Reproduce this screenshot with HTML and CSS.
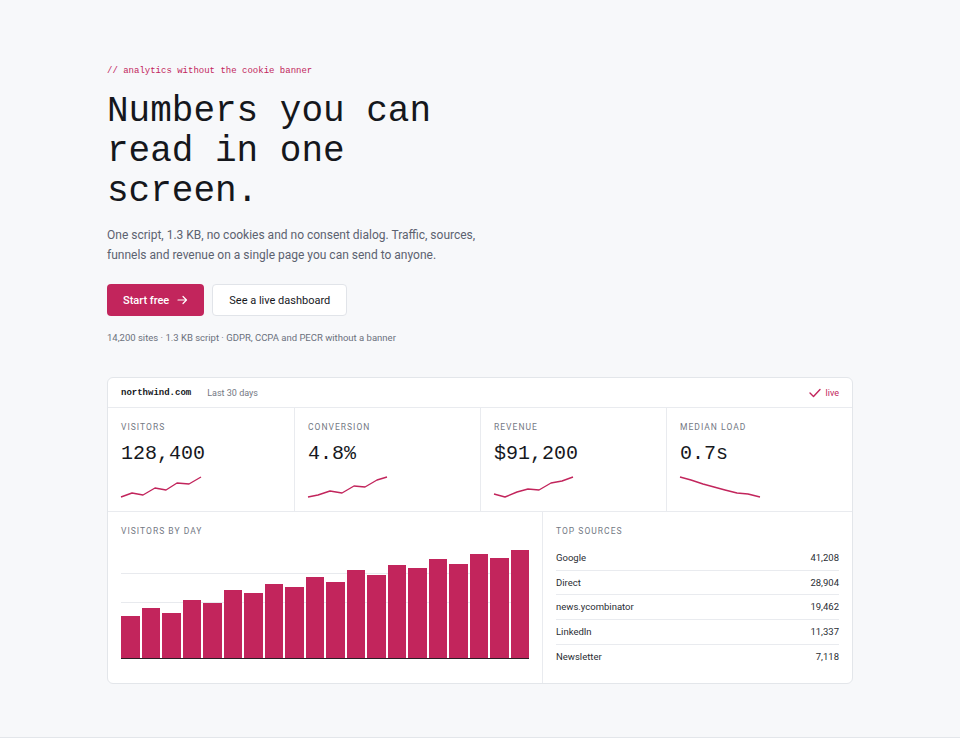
FILE: index.html
```html
<!DOCTYPE html>
<html lang="en">
<head>
    <title>northwind analytics</title>
    <link rel="stylesheet" href="styles.css">
</head>
<body>
    <section class="hero">
        <div class="wrap">
            <p class="eyebrow">// analytics without the cookie banner</p>
            <h1 class="title">Numbers you can read in one screen.</h1>
            <p class="lead">One script, 1.3 KB, no cookies and no consent dialog. Traffic, sources, funnels and revenue on a single page you can send to anyone.</p>

            <div class="actions">
                <a class="btn btn-primary" href="#">Start free
                    <svg class="arrow" width="11" height="10" viewBox="0 0 11 10"><path d="M1 5h8.5M6 1.5 9.5 5 6 8.5" fill="none" stroke="white" stroke-width="1.2" stroke-linecap="round" stroke-linejoin="round"/></svg>
                </a>
                <a class="btn btn-ghost" href="#">See a live dashboard</a>
            </div>

            <p class="proof">14,200 sites &middot; 1.3 KB script &middot; GDPR, CCPA and PECR without a banner</p>

            <div class="card">
                <div class="card-head">
                    <span class="site">northwind.com</span>
                    <span class="range">Last 30 days</span>
                    <span class="live">
                        <svg width="12" height="10" viewBox="0 0 12 10"><polyline points="1,5 4.5,8.5 11,1.5" fill="none" stroke="#c2255c" stroke-width="1.4" stroke-linecap="round" stroke-linejoin="round"/></svg>
                        live
                    </span>
                </div>

                <div class="stats">
                    <div class="stat">
                        <div class="label">Visitors</div>
                        <div class="value">128,400</div>
                        <svg class="spark" width="82" height="24" viewBox="0 0 82 24"><polyline points="1,22 12,18 23,20 35,13 46,15 57,8 69,9 81,2"/></svg>
                    </div>
                    <div class="stat">
                        <div class="label">Conversion</div>
                        <div class="value">4.8%</div>
                        <svg class="spark" width="82" height="24" viewBox="0 0 82 24"><polyline points="1,22 11,20 23,16 35,18 47,11 58,12 70,5 80,2"/></svg>
                    </div>
                    <div class="stat">
                        <div class="label">Revenue</div>
                        <div class="value">$91,200</div>
                        <svg class="spark" width="82" height="24" viewBox="0 0 82 24"><polyline points="1,19 12,22 24,17 35,14 46,15 58,8 69,6 80,2"/></svg>
                    </div>
                    <div class="stat">
                        <div class="label">Median load</div>
                        <div class="value">0.7s</div>
                        <svg class="spark" width="82" height="24" viewBox="0 0 82 24"><polyline points="1,2 12,5 24,9 35,12 46,15 58,18 69,19 81,22"/></svg>
                    </div>
                </div>

                <div class="lower">
                    <div class="panel">
                        <div class="label">Visitors by day</div>
                        <div class="chart">
                            <div class="bar" style="height:42px"></div>
                            <div class="bar" style="height:50px"></div>
                            <div class="bar" style="height:45px"></div>
                            <div class="bar" style="height:58px"></div>
                            <div class="bar" style="height:55px"></div>
                            <div class="bar" style="height:68px"></div>
                            <div class="bar" style="height:65px"></div>
                            <div class="bar" style="height:74px"></div>
                            <div class="bar" style="height:71px"></div>
                            <div class="bar" style="height:81px"></div>
                            <div class="bar" style="height:76px"></div>
                            <div class="bar" style="height:88px"></div>
                            <div class="bar" style="height:83px"></div>
                            <div class="bar" style="height:93px"></div>
                            <div class="bar" style="height:90px"></div>
                            <div class="bar" style="height:99px"></div>
                            <div class="bar" style="height:94px"></div>
                            <div class="bar" style="height:104px"></div>
                            <div class="bar" style="height:100px"></div>
                            <div class="bar" style="height:108px"></div>
                        </div>
                    </div>
                    <div class="panel sources">
                        <div class="label">Top sources</div>
                        <ul class="rows">
                            <li><span>Google</span><span>41,208</span></li>
                            <li><span>Direct</span><span>28,904</span></li>
                            <li><span>news.ycombinator</span><span>19,462</span></li>
                            <li><span>LinkedIn</span><span>11,337</span></li>
                            <li><span>Newsletter</span><span>7,118</span></li>
                        </ul>
                    </div>
                </div>
            </div>
        </div>
    </section>
</body>
</html>
```

FILE: styles.css
```css
body {
    margin: 0;
    background-color: #f7f8fa;
    color: #16181d;
    font-family: Roboto, "Noto Sans", sans-serif;
}

.hero {
    padding: 64px 0 53px;
    border-bottom: 1px solid #e3e6ea;
}

.wrap {
    width: 746px;
    margin: 0 auto;
}

.eyebrow {
    margin: 0;
    font-family: "Liberation Mono", monospace;
    font-size: 9px;
    line-height: 14px;
    color: #c2255c;
}

.title {
    max-width: 16ch;
    margin: 14px 0 0;
    font-family: "Liberation Mono", monospace;
    font-size: 36px;
    font-weight: 400;
    line-height: 40px;
    color: #15171c;
}

.lead {
    max-width: 385px;
    margin: 14px 0 0;
    font-size: 12px;
    line-height: 19.5px;
    color: #5c6270;
}

.actions {
    display: flex;
    gap: 8px;
    margin-top: 19px;
}

.btn {
    display: inline-flex;
    align-items: center;
    height: 32px;
    padding: 0 16px;
    border-radius: 4px;
    font-size: 11px;
    text-decoration: none;
    box-sizing: border-box;
}

.btn-primary {
    background-color: #c2255c;
    color: white;
    font-weight: 500;
}

.arrow {
    margin-left: 8px;
}

.btn-ghost {
    background-color: white;
    border: 1px solid #e1e4e9;
    color: #16181d;
}

.proof {
    margin: 14px 0 0;
    font-size: 9.5px;
    line-height: 15px;
    color: #6b717d;
}

.card {
    margin-top: 32px;
    background-color: white;
    border: 1px solid #e3e6ea;
    border-radius: 6px;
}

.card-head {
    display: flex;
    align-items: center;
    gap: 16px;
    height: 29px;
    padding: 0 13px;
    border-bottom: 1px solid #e9ebef;
}

.site {
    font-family: "Liberation Mono", monospace;
    font-size: 9px;
    font-weight: 700;
}

.range {
    font-size: 9px;
    color: #737883;
}

.live {
    display: flex;
    align-items: center;
    gap: 5px;
    margin-left: auto;
    font-size: 9px;
    color: #c2255c;
}

.stats {
    display: grid;
    grid-template-columns: repeat(4, 1fr);
    border-bottom: 1px solid #e9ebef;
}

.stat {
    padding: 13px 13px 12px;
    border-left: 1px solid #e9ebef;
}

.stat:first-child {
    border-left: none;
}

.label {
    font-size: 8.5px;
    line-height: 12px;
    letter-spacing: 0.12em;
    text-transform: uppercase;
    color: #737883;
}

.value {
    margin-top: 9px;
    font-family: "Liberation Mono", monospace;
    font-size: 20px;
    line-height: 24px;
}

.spark {
    display: block;
    margin-top: 9px;
    margin-left: -1px;
}

.spark polyline {
    fill: none;
    stroke: #c2255c;
    stroke-width: 1.4;
    stroke-linejoin: round;
}

.lower {
    display: grid;
    grid-template-columns: 7fr 5fr;
}

.panel {
    padding: 13px 13px 24px;
}

.chart {
    display: flex;
    align-items: flex-end;
    gap: 2px;
    height: 113px;
    margin-top: 8px;
    border-bottom: 1px solid #2b1d24;
    background-image: linear-gradient(#e8eaee, #e8eaee), linear-gradient(#e8eaee, #e8eaee);
    background-size: 100% 1px;
    background-repeat: no-repeat;
    background-position: 0 28px, 0 57px;
}

.bar {
    flex: 1;
    background-color: #c2255c;
}

.sources {
    padding-bottom: 15px;
    border-left: 1px solid #e9ebef;
}

.rows {
    list-style: none;
    margin: 9px 0 0;
    padding: 0;
}

.rows li {
    display: flex;
    justify-content: space-between;
    padding: 6px 0 5.7px;
    font-size: 9.5px;
    line-height: 12px;
    color: #2a2d34;
    border-bottom: 1px solid #e9ebef;
}

.rows li:last-child {
    border-bottom: none;
}
```
